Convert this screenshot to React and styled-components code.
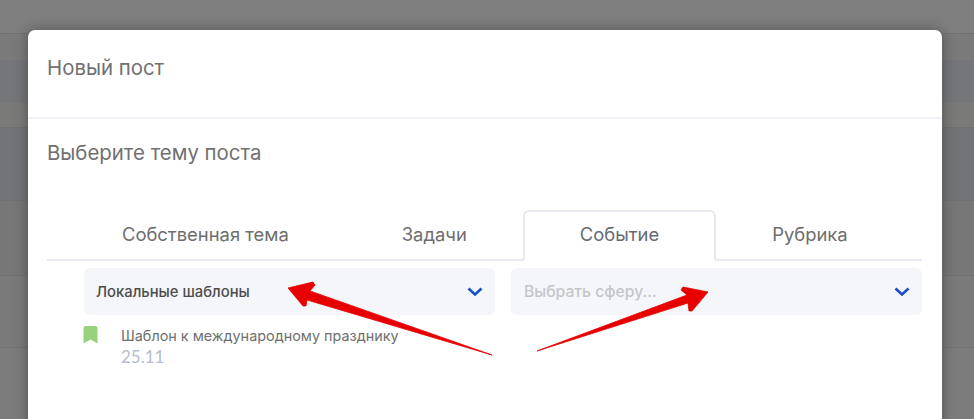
import React, { useState } from 'react'
import styled, { createGlobalStyle } from 'styled-components'

const GlobalStyle = createGlobalStyle`
  html, body {
    margin: 0;
    padding: 0;
    background: #7d7d7d;
    font-family: 'Inter', 'Roboto', sans-serif;
  }
`

const Page = styled.div`
  position: relative;
  width: 974px;
  height: 419px;
  overflow: hidden;
`

const BackdropRow = styled.div`
  height: ${(p) => p.$height}px;
  background: ${(p) => p.$color};
  border-bottom: ${(p) => (p.$line ? '1px solid #717171' : 'none')};
  box-sizing: border-box;
`

const Modal = styled.div`
  position: absolute;
  top: 30px;
  left: 28px;
  width: 914px;
  height: 420px;
  background: #fff;
  border-radius: 7px;
  box-shadow: 0 0 14px rgba(0, 0, 0, 0.35);
`

const Header = styled.div`
  height: 89px;
  box-sizing: border-box;
  padding: 26px 19px 0;
  border-bottom: 2px solid #eef1f6;
`

const Title = styled.div`
  font-size: 20.4px;
  line-height: 24px;
  color: #707070;
`

const Body = styled.div`
  padding: 22px 20px 0 19px;
`

const Tabs = styled.div`
  display: flex;
  margin-top: 45px;
  padding-left: 18.5px;
  height: 51px;
  box-sizing: border-box;
  border-bottom: 2px solid #e6e9ef;
`

const Tab = styled.div`
  box-sizing: border-box;
  height: 51px;
  padding: 9px 54.5px 0;
  font-size: 18.4px;
  line-height: 26px;
  white-space: nowrap;
  color: ${(p) => (p.$active ? '#656b72' : '#6e6e6e')};
  background: ${(p) => (p.$active ? '#fff' : 'transparent')};
  border: 2px solid ${(p) => (p.$active ? '#e6e9ef' : 'transparent')};
  border-bottom: ${(p) => (p.$active ? '2px solid #fff' : 'none')};
  border-radius: 6px 6px 0 0;
`

const Selects = styled.div`
  display: grid;
  grid-template-columns: 1fr 1fr;
  gap: 16px;
  margin-top: 7px;
  padding-left: 37px;
`

const Select = styled.div`
  display: flex;
  align-items: center;
  justify-content: space-between;
  height: 47px;
  box-sizing: border-box;
  padding: 0 11.5px 0 12px;
  background: #f4f6fa;
  border-radius: 6px;
`

const SelectLabel = styled.span`
  font-size: ${(p) => (p.$placeholder ? '15.7px' : '14.8px')};
  font-weight: 500;
  margin-left: ${(p) => (p.$placeholder ? '1px' : '0')};
  color: ${(p) => (p.$placeholder ? '#c4c6ca' : '#4d4d4d')};
`

const Chevron = styled.svg`
  width: 18px;
  height: 18px;
  fill: none;
  stroke: #1a4fc9;
  stroke-width: 2.6;
`

const TemplateRow = styled.div`
  display: flex;
  margin-top: 11px;
  padding-left: 36px;
`

const Bookmark = styled.svg`
  width: 15px;
  height: 18px;
  flex: none;
  fill: #96d47c;
`

const TemplateInfo = styled.div`
  margin-left: 23px;
`

const TemplateName = styled.div`
  font-size: 14.4px;
  line-height: 20px;
  color: #6f6f6f;
`

const TemplateDate = styled.div`
  margin-top: 1px;
  font-family: 'Lato', sans-serif;
  font-size: 17px;
  line-height: 20px;
  color: #b4bccb;
`

const Arrows = styled.svg`
  position: absolute;
  top: 0;
  left: 0;
  width: 974px;
  height: 419px;
  pointer-events: none;
  fill: #e60000;
  stroke: #e60000;
  stroke-width: 0.8;
  stroke-linejoin: round;
`

const backdropRows = [
  { height: 34, color: '#7f7f7f', line: true },
  { height: 26, color: '#7a7a7a' },
  { height: 43, color: '#75767a' },
  { height: 25, color: '#7a7a78', line: true },
  { height: 73, color: '#737477', line: true },
  { height: 75, color: '#777777', line: true },
  { height: 72, color: '#7a7a7a', line: true },
  { height: 71, color: '#7c7c7c' },
]

const tabs = ['Собственная тема', 'Задачи', 'Событие', 'Рубрика']

const ChevronDown = () => (
  <Chevron viewBox="0 0 18 18">
    <path d="M2.5 5.5 L9 11.5 L15.5 5.5" />
  </Chevron>
)

export default function App() {
  const [activeTab, setActiveTab] = useState(2)

  return (
    <Page>
      <GlobalStyle />
      {backdropRows.map((row, i) => (
        <BackdropRow key={i} $height={row.height} $color={row.color} $line={row.line} />
      ))}
      <Modal>
        <Header>
          <Title>Новый пост</Title>
        </Header>
        <Body>
          <Title>Выберите тему поста</Title>
          <Tabs>
            {tabs.map((tab, i) => (
              <Tab key={tab} $active={i === activeTab} onClick={() => setActiveTab(i)}>
                {tab}
              </Tab>
            ))}
          </Tabs>
          <Selects>
            <Select>
              <SelectLabel>Локальные шаблоны</SelectLabel>
              <ChevronDown />
            </Select>
            <Select>
              <SelectLabel $placeholder>Выбрать сферу...</SelectLabel>
              <ChevronDown />
            </Select>
          </Selects>
          <TemplateRow>
            <Bookmark viewBox="0 0 15 18">
              <path d="M2.5 0 H12.5 A2 2 0 0 1 14.5 2 V17.5 L7.5 13.5 L0.5 17.5 V2 A2 2 0 0 1 2.5 0 Z" />
            </Bookmark>
            <TemplateInfo>
              <TemplateName>Шаблон к международному празднику</TemplateName>
              <TemplateDate>25.11</TemplateDate>
            </TemplateInfo>
          </TemplateRow>
        </Body>
      </Modal>
      <Arrows viewBox="0 0 974 419">
        <path d="M288 288 L313 282 L315 285 L310 291 L492 355 L307 300 L306 306 L303 306 Z" />
        <path d="M708 292 L683 287 L681 290 L687 295 L537 351 L688 303 L689 311 L692 311 Z" />
      </Arrows>
    </Page>
  )
}
